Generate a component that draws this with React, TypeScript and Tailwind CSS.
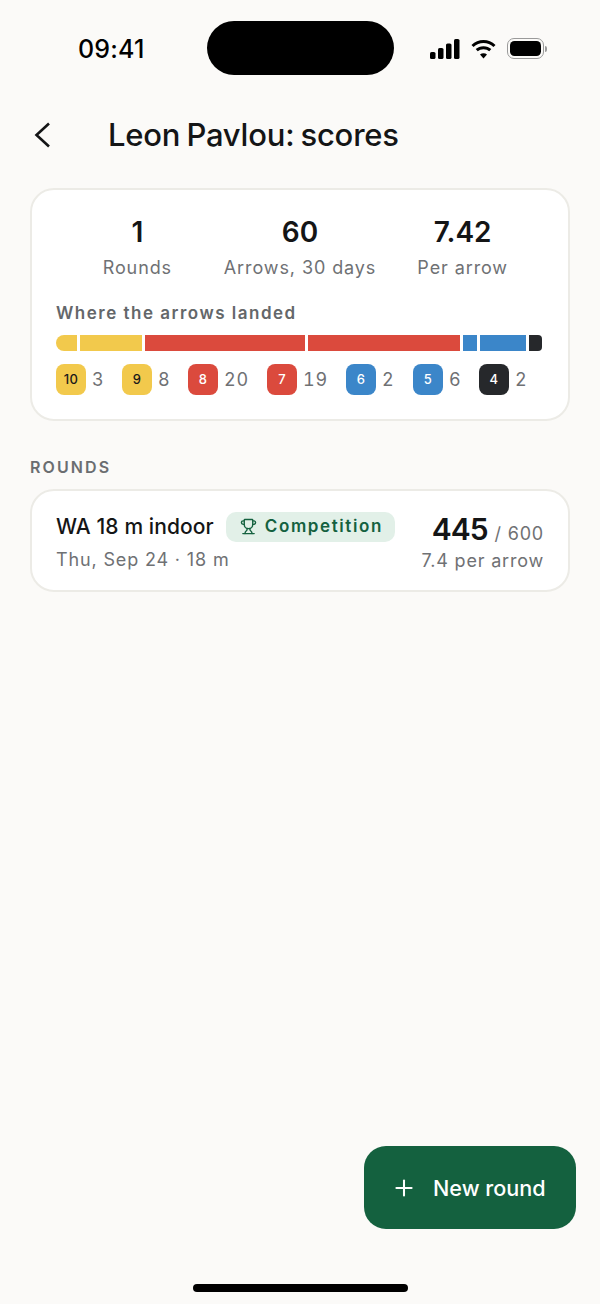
import { Plus, Trophy } from "lucide-react";

const stats = [
  { value: "1", label: "Rounds" },
  { value: "60", label: "Arrows, 30 days" },
  { value: "7.42", label: "Per arrow" },
];

const segs = [
  { cls: "w-[21px] bg-[#f2c94c] rounded-l-[8px]" },
  { cls: "w-[62px] bg-[#f2c94c]" },
  { cls: "w-[160px] bg-[#db4a3d]" },
  { cls: "w-[152px] bg-[#db4a3d]" },
  { cls: "w-[14px] bg-[#3b86c9]" },
  { cls: "w-[46px] bg-[#3b86c9]" },
  { cls: "w-[13px] bg-[#26282b] rounded-r-[4px]" },
];

const chips = [
  { n: "10", c: "3", w: "w-[66px]", cls: "bg-[#f2c94c] text-[#1a1a1a]" },
  { n: "9", c: "8", w: "w-[66px]", cls: "bg-[#f2c94c] text-[#1a1a1a]" },
  { n: "8", c: "20", w: "w-[79px]", cls: "bg-[#db4a3d] text-white" },
  { n: "7", c: "19", w: "w-[79px]", cls: "bg-[#db4a3d] text-white" },
  { n: "6", c: "2", w: "w-[67px]", cls: "bg-[#3b86c9] text-white" },
  { n: "5", c: "6", w: "w-[66px]", cls: "bg-[#3b86c9] text-white" },
  { n: "4", c: "2", w: "w-[60px]", cls: "bg-[#26282b] text-white" },
];

function StatusIcons() {
  return (
    <div className="flex items-center gap-[11px]">
      <svg width="30" height="20" viewBox="0 0 30 20" fill="#000">
        <rect x="0" y="13" width="5.5" height="7" rx="1.6" />
        <rect x="8" y="9" width="5.5" height="11" rx="1.6" />
        <rect x="16" y="4.5" width="5.5" height="15.5" rx="1.6" />
        <rect x="24" y="0" width="5.5" height="20" rx="1.6" />
      </svg>
      <svg width="25" height="20" viewBox="0 0 25 20" fill="none" stroke="#000" strokeWidth="3">
        <path d="M1.5 7 C7.8 1 17.2 1 23.5 7" />
        <path d="M5.7 11.2 C9.3 7.8 15.7 7.8 19.3 11.2" />
        <path d="M12.5 19.5 L9 15.5 C11 13.8 14 13.8 16 15.5 Z" fill="#000" stroke="none" />
      </svg>
      <div className="flex items-center gap-[1px]">
        <div className="w-[37px] h-[21px] rounded-[7px] border-[1.5px] border-[#9a9a9a] p-[2px]">
          <div className="w-full h-full rounded-[4.5px] bg-black" />
        </div>
        <div className="w-[2px] h-[6px] rounded-r-full bg-[#9a9a9a]" />
      </div>
    </div>
  );
}

export default function App() {
  return (
    <div
      className="relative w-[600px] h-[1304px] overflow-hidden bg-[#fbfaf8] text-[#141516]"
      style={{ fontFamily: "Inter, 'Liberation Sans', sans-serif" }}
    >
      {/* status bar */}
      <div className="h-[96px] pt-[21px] pl-[78px] flex items-start">
        <div className="w-[129px] mt-[13px] text-[25px] leading-[30px] font-medium tracking-[0.2px] text-black">09:41</div>
        <div className="w-[187px] h-[54px] rounded-[27px] bg-black" />
        <div className="ml-[36px] mt-[17px]">
          <StatusIcons />
        </div>
      </div>

      {/* header */}
      <div className="h-[92px] pl-[34px] flex items-start gap-[58px]">
        <svg width="16" height="26" viewBox="0 0 16 26" fill="none" stroke="#141516" strokeWidth="2.6" className="mt-[26px]">
          <path d="M15 1.5 L2.5 13 L15 24.5" />
        </svg>
        <h1 className="mt-[20px] text-[31px] leading-[38px] font-medium tracking-[-0.2px] [word-spacing:-2px]">Leon Pavlou: scores</h1>
      </div>

      {/* summary card */}
      <div className="mx-[30px] h-[233px] rounded-[24px] border-2 border-[#ecebe6] bg-white px-[24px] pt-[24px]">
        <div className="flex">
          {stats.map((s) => (
            <div key={s.label} className="w-[163px] flex flex-col items-center">
              <div className="text-[28px] leading-[36px] font-semibold">{s.value}</div>
              <div className="mt-[6px] text-[18px] leading-[24px] tracking-[0.9px] text-[#6f7174]">{s.label}</div>
            </div>
          ))}
        </div>
        <div className="mt-[21px] text-[17px] leading-[24px] font-semibold tracking-[1.5px] text-[#64676a]">
          Where the arrows landed
        </div>
        <div className="mt-[10px] h-[16px] flex gap-[3px]">
          {segs.map((s, i) => (
            <div key={i} className={`h-full ${s.cls}`} />
          ))}
        </div>
        <div className="mt-[13px] flex">
          {chips.map((c, i) => (
            <div key={i} className={`flex items-center gap-[6px] ${c.w}`}>
              <div className={`shrink-0 w-[30px] h-[31px] rounded-[8px] flex items-center justify-center text-[13px] font-medium tracking-[0.3px] ${c.cls}`}>
                {c.n}
              </div>
              <div className="text-[18px] tabular-nums tracking-[0.8px] text-[#6f7174]">{c.c}</div>
            </div>
          ))}
        </div>
      </div>

      {/* rounds */}
      <div className="mt-[35px] mx-[30px] text-[16px] leading-[22px] font-semibold tracking-[2.1px] text-[#6a6d70]">ROUNDS</div>
      <div className="mt-[11px] mx-[30px] h-[103px] rounded-[24px] border-2 border-[#ecebe6] bg-white px-[24px] flex justify-between">
        <div className="pt-[20px]">
          <div className="flex items-center gap-[12px]">
            <span className="pt-[1px] text-[21px] leading-[30px] font-medium tracking-[0.1px]">WA 18 m indoor</span>
            <span className="h-[30px] w-[169px] rounded-[10px] bg-[#e2f0e8] flex items-center gap-[8px] pl-[14px] text-[#14613f]">
              <Trophy size={17} strokeWidth={2} />
              <span className="text-[17px] font-semibold tracking-[1.6px]">Competition</span>
            </span>
          </div>
          <div className="mt-[6px] text-[18px] leading-[24px] tracking-[0.85px] text-[#6f7174]">Thu, Sep 24 · 18 m</div>
        </div>
        <div className="pt-[20px] flex flex-col items-end">
          <div className="flex items-baseline gap-[7px] leading-[36px]">
            <span className="text-[30px] leading-[36px] font-semibold tracking-[-1px]">445</span>
            <span className="text-[18px] tracking-[0.8px] text-[#6f7174]">/ 600</span>
          </div>
          <div className="-mt-[3px] text-[18px] leading-[24px] tracking-[0.8px] text-[#6f7174]">7.4 per arrow</div>
        </div>
      </div>

      {/* FAB */}
      <div className="absolute left-[364px] top-[1146px] w-[212px] h-[83px] rounded-[22px] bg-[#14613f] flex items-center gap-[16px] pl-[27px] text-white">
        <Plus size={26} strokeWidth={1.9} />
        <span className="pt-[2px] text-[21.6px] font-medium">New round</span>
      </div>

      {/* home indicator */}
      <div className="absolute left-[193px] top-[1284px] w-[215px] h-[8px] rounded-full bg-black" />
    </div>
  );
}
